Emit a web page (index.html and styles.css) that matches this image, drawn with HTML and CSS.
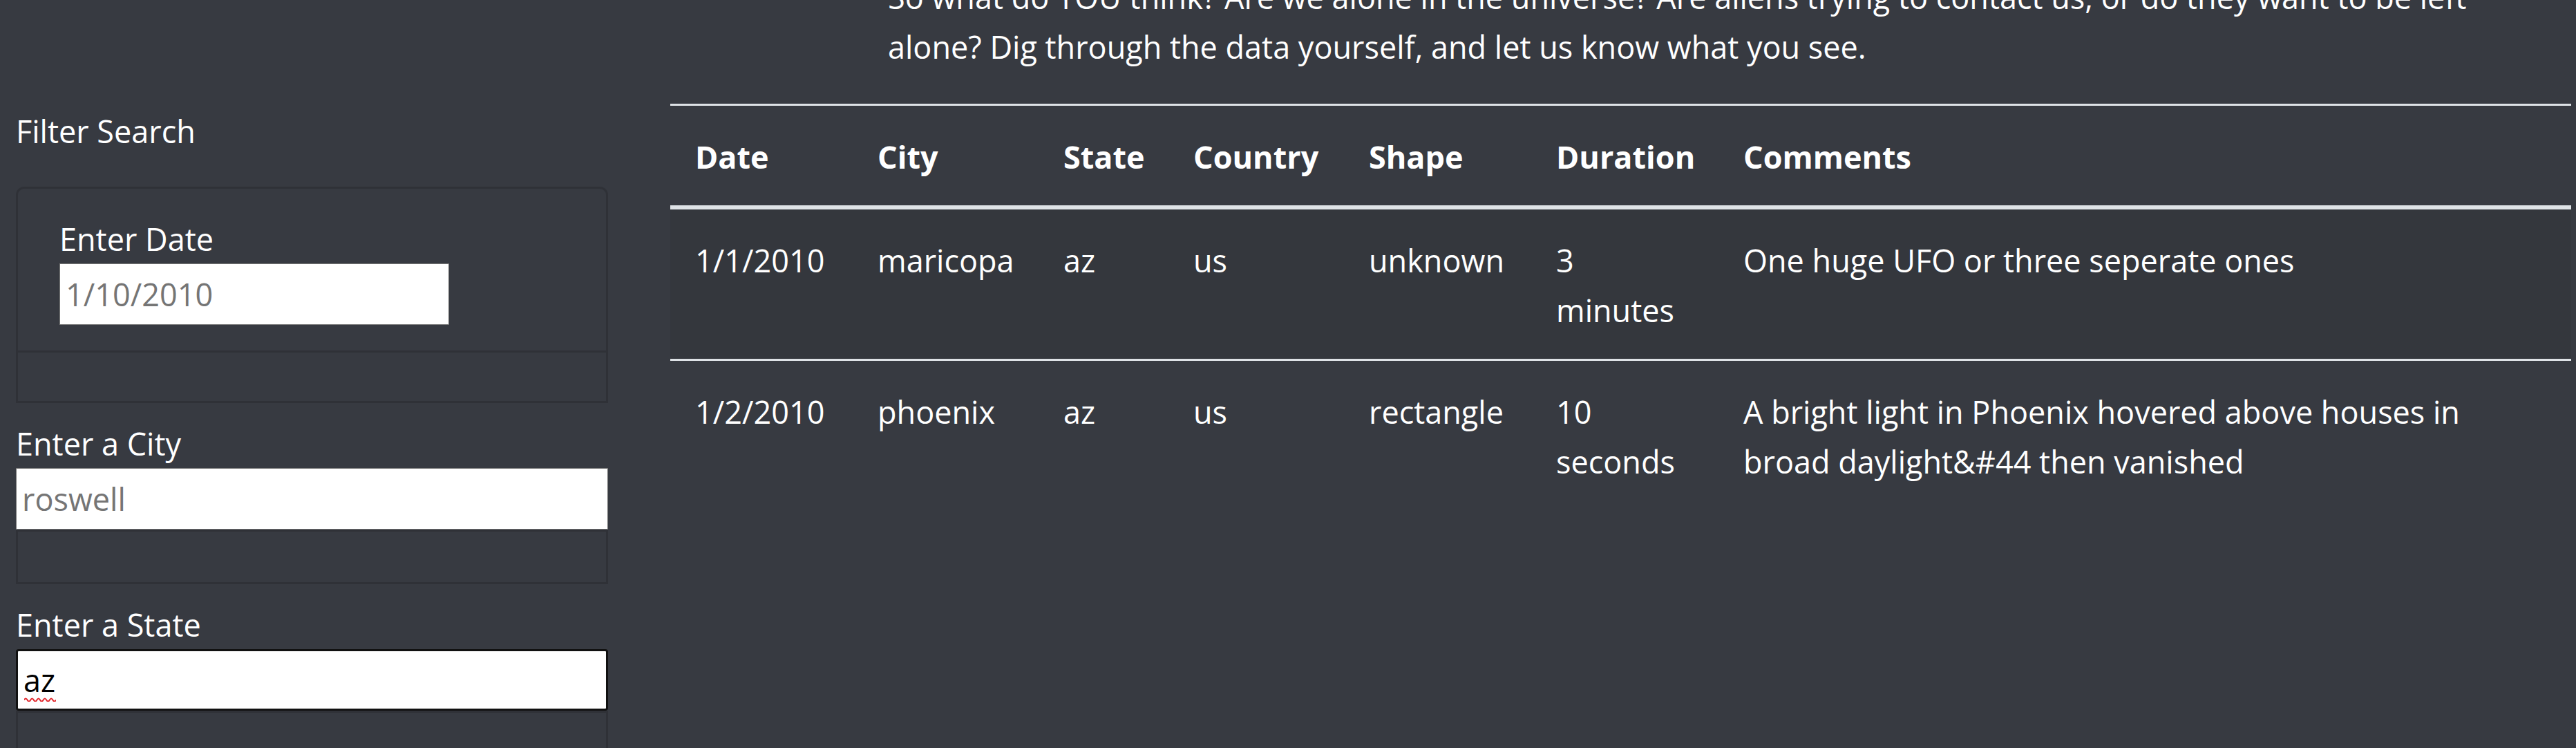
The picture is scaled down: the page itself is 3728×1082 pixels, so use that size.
FILE: index.html
```html
<!DOCTYPE html>
<html lang="en">
<head>
<meta charset="utf-8">
<title>UFO Sightings</title>
<link rel="stylesheet" href="styles.css">
</head>
<body>
<div class="page">
  <aside class="sidebar">
    <div class="filter-title">Filter Search</div>
    <ul class="filters">
      <li class="filter-item">
        <label class="label" for="datetime">Enter Date</label>
        <input class="field field-date" id="datetime" type="text" placeholder="1/10/2010">
      </li>
      <li class="filter-item filter-empty"></li>
    </ul>
    <div class="group">
      <label class="label" for="city">Enter a City</label>
      <input class="field" id="city" type="text" placeholder="roswell">
      <div class="spacer-box"></div>
    </div>
    <div class="group">
      <label class="label" for="state">Enter a State</label>
      <div class="field-wrap">
        <input class="field field-focus" id="state" type="text" value="az">
        <svg class="squiggle" width="46" height="7" viewBox="0 0 46 7"><path d="M0 4.5 Q2.3 0.5 4.6 4.5 T9.2 4.5 T13.8 4.5 T18.4 4.5 T23 4.5 T27.6 4.5 T32.2 4.5 T36.8 4.5 T41.4 4.5 T46 4.5" fill="none" stroke="#e2262b" stroke-width="2"/></svg>
      </div>
      <div class="spacer-box"></div>
    </div>
  </aside>
  <main class="content">
    <p class="intro">So what do YOU think? Are we alone in the universe? Are aliens trying to contact us, or do they want to be left alone? Dig through the data yourself, and let us know what you see.</p>
    <table class="sightings">
      <thead>
        <tr>
          <th class="c-date">Date</th>
          <th class="c-city">City</th>
          <th class="c-state">State</th>
          <th class="c-country">Country</th>
          <th class="c-shape">Shape</th>
          <th class="c-duration">Duration</th>
          <th class="c-comments">Comments</th>
        </tr>
      </thead>
      <tbody>
        <tr>
          <td>1/1/2010</td>
          <td>maricopa</td>
          <td>az</td>
          <td>us</td>
          <td>unknown</td>
          <td>3 minutes</td>
          <td>One huge UFO or three seperate ones</td>
        </tr>
        <tr>
          <td>1/2/2010</td>
          <td>phoenix</td>
          <td>az</td>
          <td>us</td>
          <td>rectangle</td>
          <td>10 seconds</td>
          <td>A bright light in Phoenix hovered above houses in broad daylight&amp;#44 then vanished</td>
        </tr>
      </tbody>
    </table>
  </main>
</div>
</body>
</html>
```
FILE: styles.css
```css
* {
  box-sizing: border-box;
}

html,
body {
  margin: 0;
  padding: 0;
}

body {
  background: #373a41;
  color: #ffffff;
  font-family: "Open Sans", "Noto Sans", sans-serif;
  font-size: 45px;
  line-height: 72px;
  height: 1082px;
  overflow: hidden;
}

.page {
  display: flex;
  align-items: flex-start;
  padding-left: 23px;
}

/* ---------- sidebar ---------- */
.sidebar {
  flex: none;
  width: 857px;
  padding-top: 151px;
}

.filter-title {
  padding-top: 3px;
  margin-bottom: 44px;
}

.filters {
  list-style: none;
  margin: 0;
  padding: 0;
  border: 3px solid rgba(0, 0, 0, 0.14);
  border-radius: 12px 12px 0 0;
}

.filter-item {
  padding: 36px 60px 37px;
}

.filter-empty {
  padding: 0;
  height: 73px;
  border-top: 3px solid rgba(0, 0, 0, 0.14);
}

.label {
  display: block;
  height: 72px;
  padding-top: 2px;
  line-height: 70px;
}

.field {
  display: block;
  width: 100%;
  height: 89px;
  margin: 0;
  padding: 0 8px;
  border: 1px solid #767676;
  border-radius: 0;
  background: #ffffff;
  color: #000000;
  font-family: "Open Sans", "Noto Sans", sans-serif;
  font-size: 45px;
  outline: none;
}

.field::placeholder {
  color: #757575;
  opacity: 1;
}

.field-date {
  width: 564px;
}

.field-focus {
  border: 3px solid #111111;
  border-radius: 4px;
}

.field-wrap {
  position: relative;
}

.squiggle {
  position: absolute;
  left: 12px;
  top: 69px;
}

.group {
  margin-top: 22px;
}

.spacer-box {
  height: 79px;
  border: 3px solid rgba(0, 0, 0, 0.14);
}

/* ---------- content ---------- */
.content {
  flex: none;
  width: 2751px;
  margin-left: 90px;
}

.intro {
  width: 2420px;
  margin: -40px 0 46px 315px;
}

.sightings {
  width: 2751px;
  table-layout: fixed;
  border-collapse: separate;
  border-spacing: 0;
}

.sightings th,
.sightings td {
  padding: 38px 36px 34px;
  text-align: left;
}

.sightings th {
  font-weight: 700;
  vertical-align: bottom;
  border-top: 3px solid #dee2e6;
  border-bottom: 6px solid #dee2e6;
}

.sightings td {
  vertical-align: top;
}

.sightings tbody tr + tr td {
  border-top: 3px solid #dee2e6;
}

.sightings tbody tr:nth-child(odd) {
  background: rgba(0, 0, 0, 0.05);
}

.c-date { width: 264px; }
.c-city { width: 269px; }
.c-state { width: 188px; }
.c-country { width: 254px; }
.c-shape { width: 271px; }
.c-duration { width: 271px; }
.c-comments { width: 1234px; }
```
